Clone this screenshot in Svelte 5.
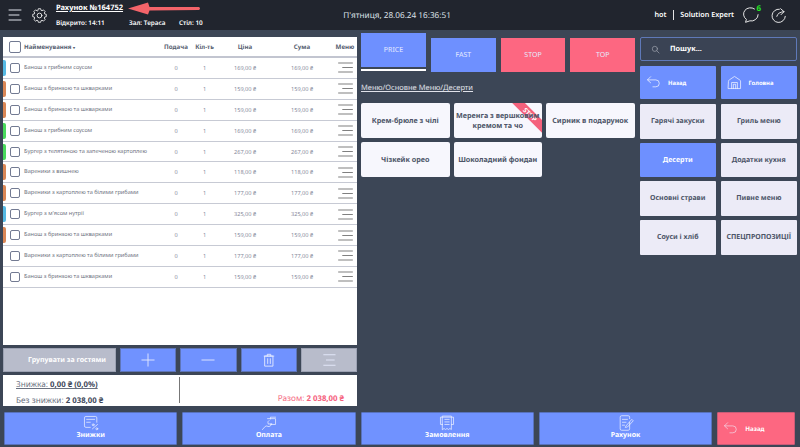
<script>
  const rows = [
    ['blue', 'Банош з грибним соусом', '169,00'],
    ['orange', 'Банош з бринзою та шкварками', '159,00'],
    ['orange', 'Банош з бринзою та шкварками', '159,00'],
    ['green', 'Банош з грибним соусом', '169,00'],
    ['green', 'Бургер з телятиною та запеченою картоплею', '267,00'],
    ['orange', 'Вареники з вишнею', '118,00'],
    ['orange', 'Вареники з картоплею та білими грибами', '177,00'],
    ['blue', "Бургер з м'ясом нутрії", '325,00'],
    ['orange', 'Банош з бринзою та шкварками', '159,00'],
    ['none', 'Вареники з картоплею та білими грибами', '177,00'],
    ['none', 'Банош з бринзою та шкварками', '159,00']
  ];
  const products = [['Крем-брюле з чілі'], ['Меренга з вершковим', 'кремом та чо'], ['Сирник в подарунок'], ['Чізкейк орео'], ['Шоколадний фондан']];
  const cats = ['Гарячі закуски', 'Гриль меню', 'Десерти', 'Додатки кухня', 'Основні страви', 'Пивне меню', 'Соуси і хліб', 'СПЕЦПРОПОЗИЦІЇ'];

  // 8-tooth gear outline
  const gearPath = (() => {
    const pts = [];
    for (let i = 0; i < 8; i++) {
      const a = (i * Math.PI) / 4;
      for (const [d, r] of [[-0.3, 8.6], [-0.17, 11], [0.17, 11], [0.3, 8.6]]) {
        pts.push((12 + r * Math.sin(a + d)).toFixed(2) + ' ' + (12 - r * Math.cos(a + d)).toFixed(2));
      }
    }
    return 'M' + pts.join('L') + 'Z';
  })();
</script>

{#snippet back()}
  <svg class="ic26" viewBox="0 0 26 26"><path d="M8 3 L2.5 8.5 L8 13.5 M3 8.5 H17 Q23 8.5 23 14.5 Q23 20.5 17 20.5 H12" /></svg>
{/snippet}
{#snippet lines()}
  <svg class="menu" viewBox="0 0 18 12"><path d="M1 1H17M5.500 6H17M1 11H17" /></svg>
{/snippet}

<div class="page">
  <header class="top">
    <div class="top-left">
      <svg class="burger" viewBox="0 0 14 12"><path d="M1 1H13M1 6H11M1 11H13" /></svg>
      <svg class="gear" viewBox="0 0 24 24"><circle cx="12" cy="12" r="3.8" /><path d={gearPath} /></svg>
      <div class="order">
        <div class="order-no">Рахунок №164752</div>
        <div class="order-meta"><span class="m1">Відкрито: 14:11</span><span class="m2">Зал: Тераса</span><span>Стіл: 10</span></div>
      </div>
    </div>
    <div class="date">П'ятниця, 28.06.24 16:36:51</div>
    <div class="top-right">
      <span class="user">hot</span><span class="sep"></span><span class="user">Solution Expert</span>
      <span class="chat">
        <svg class="ic-top" viewBox="0 0 20 20"><path d="M13.5 2.300A8 7.500 0 0 0 4 14.500L3 18L8 16.300A8 7.500 0 0 0 17.800 9" /></svg>
        <b>6</b>
      </span>
      <svg class="ic-top share" viewBox="0 0 20 20"><path d="M11 2.600A7.800 7.800 0 1 0 18 11M8 11Q9 6 16.500 5.500M12.500 2L16.500 5.500L13 9" /></svg>
    </div>
  </header>

  <main class="main">
    <section class="left">
      <div class="table">
        <div class="row head">
          <span class="stripe none"></span><span class="cb big"></span>
          <span class="name">Найменування <i>▾</i></span>
          <span class="c1">Подача</span><span class="c2">Кіл-ть</span><span class="c3">Ціна</span><span class="c4">Сума</span><span class="c5">Меню</span>
        </div>
        {#each rows as r}
          <div class="row">
            <span class="stripe {r[0]}"></span><span class="cb"></span>
            <span class="name">{r[1]}</span>
            <span class="c1">0</span><span class="c2">1</span><span class="c3">{r[2]} ₴</span><span class="c4">{r[2]} ₴</span>
            <span class="c5">{@render lines()}</span>
          </div>
        {/each}
      </div>
      <div class="tools">
        <button class="tool grey wide">Групувати за гостями</button>
        <button class="tool"><svg viewBox="0 0 16 16"><path d="M8 1V15M1 8H15" /></svg></button>
        <button class="tool"><svg viewBox="0 0 16 16"><path d="M1 8H15" /></svg></button>
        <button class="tool"><svg viewBox="0 0 16 16"><path d="M2.500 3.500H13.500M6 3.500V1.500H10V3.500M3.500 3.500H12.500V15H3.500ZM6.500 6.500V12M9.500 6.500V12" /></svg></button>
        <button class="tool grey"><svg viewBox="0 0 16 16"><path d="M2 2H15M5 8H14M2 14H15" /></svg></button>
      </div>
      <div class="sum">
        <div class="sum-l">
          <div class="u">Знижка: <b>0,00 ₴ (0,0%)</b></div>
          <div>Без знижки: <b>2 038,00 ₴</b></div>
        </div>
        <div class="sum-r">Разом: <b>2 038,00 ₴</b></div>
      </div>
    </section>

    <section class="mid">
      <div class="tabs">
        <div class="tab-price"><button class="tab blue">PRICE</button></div>
        <button class="tab blue">FAST</button>
        <button class="tab pink">STOP</button>
        <button class="tab pink">TOP</button>
      </div>
      <div class="crumb">Меню/Основне Меню/Десерти</div>
      <div class="products">
        {#each products as p, i}
          <button class="product">
            {#if i === 1}<span class="ribbon">STOP</span>{/if}
            <span class="ptext">{#each p as l}<span class="pline">{l}</span>{/each}</span>
          </button>
        {/each}
      </div>
    </section>

    <section class="right">
      <div class="search">
        <svg viewBox="0 0 14 14"><circle cx="6" cy="6" r="4" /><path d="M9 9L12.500 12.500" /></svg>
        <span>Пошук...</span>
      </div>
      <div class="nav">
        <button class="navbtn">{@render back()}<span>Назад</span></button>
        <button class="navbtn"><svg class="ic26" viewBox="0 0 26 26"><path d="M2.500 10.500 Q2.500 9.500 4 8.500 L13 2.500 L22 8.500 Q23.500 9.500 23.500 10.500 V23.500 H2.500 Z M8 23.500 V13 H18 V23.500 M11 23.500 V16 H15 V23.500" /></svg><span>Головна</span></button>
      </div>
      <div class="cats">
        {#each cats as c}
          <button class="cat" class:active={c === 'Десерти'}>{c}</button>
        {/each}
      </div>
    </section>
  </main>

  <footer class="bottom">
    <button class="act">
      <svg viewBox="0 0 22 22"><path d="M10 17H4Q2 17 2 15V4Q2 2 4 2H17Q19 2 19 4V10M5 6H16M5 10H10M13 19L20 13" /><circle cx="14" cy="13.500" r="1.300" /><circle cx="19" cy="19" r="1.300" /></svg>
      <span>Знижки</span>
    </button>
    <button class="act">
      <svg viewBox="0 0 22 22"><path d="M9 5H20V13H13M2 20Q5 16 7 15L11 16Q14 15 15 12L10 12.500Q8 9 11 7.500M13 5.500V3H20" /></svg>
      <span>Оплата</span>
    </button>
    <button class="act">
      <svg viewBox="0 0 22 22"><path d="M5 13H2V3H20V13H17M5 1.500H17V20L15 18.500L13 20L11 18.500L9 20L7 18.500L5 20ZM8 6H14M8 9.500H14M8 13H14" /></svg>
      <span>Замовлення</span>
    </button>
    <button class="act">
      <svg viewBox="0 0 22 22"><path d="M16 10V19Q16 21 14 21H5Q3 21 3 19V3Q3 1 5 1H14Q16 1 16 3V5M6 6H13M6 10H11M6 14H9M11 15L19 6L21 8L13 16.500L10.500 17Z" /></svg>
      <span>Рахунок</span>
    </button>
    <button class="act exit">{@render back()}<span>Назад</span></button>
  </footer>

  <svg class="arrow" viewBox="0 0 74 15"><path d="M0 7.500L20 1.500L21.500 6L71 6Q73 7.500 71 9L21.500 9.500L20 13.500Z" /></svg>
</div>

<style>
  :global(body) { margin: 0; background: #3c4656; }
  * { box-sizing: border-box; }
  .page {
    position: relative; width: 800px; height: 447px; overflow: hidden;
    background: #3c4656; color: #fff;
    font-family: "Noto Sans", "Open Sans", sans-serif;
    text-rendering: geometricPrecision;
    display: flex; flex-direction: column;
  }
  button { font-family: inherit; border: 0; padding: 0; margin: 0; text-rendering: geometricPrecision; }
  svg { fill: none; stroke: currentColor; stroke-linecap: round; stroke-linejoin: round; }

  .top { height: 30px; background: #21252e; display: grid; grid-template-columns: 1fr auto 1fr; align-items: center; flex: none; }
  .top-left { display: flex; align-items: center; padding-left: 8px; }
  .burger { width: 14px; height: 12px; stroke: #dfe3ea; stroke-width: 1; margin-top: -1px; }
  .gear { width: 15px; height: 15px; stroke: #f0f0f0; stroke-width: 1.400; margin: 0 0 0 10px; }
  .order { margin-left: 9px; margin-top: -1px; }
  .order-no { font-size: 7.500px; font-weight: 700; line-height: 10px; text-decoration: underline; }
  .order-meta { font-size: 6.400px; font-weight: 600; line-height: 8px; margin-top: 6px; white-space: nowrap; display: flex; }
  .m1 { width: 73px; } .m2 { width: 50px; }
  .date { font-size: 8.200px; color: #dde1e8; padding-right: 6px; }
  .top-right { display: flex; align-items: center; justify-content: flex-end; padding-right: 13px; font-size: 7.200px; font-weight: 600; }
  .sep { width: 1px; height: 10px; background: #e4e4e4; margin: 0 6.500px; }
  .chat { position: relative; display: flex; margin-left: 9px; }
  .ic-top { width: 17px; height: 17px; stroke: #f2f2f2; stroke-width: 1.100; }
  .chat b { position: absolute; right: -1px; top: -3px; font-size: 8px; line-height: 10px; color: #23e823; font-weight: 700; }
  .share { margin-left: 10px; }

  .main { display: flex; flex: 1; min-height: 0; padding: 7px 3px 0 3px; gap: 4px; }
  .left { width: 354px; flex: none; display: flex; flex-direction: column; }
  .table { height: 308px; background: #fff; }
  .row {
    height: 20.900px; display: flex; align-items: center; color: #6e7280; font-size: 5.600px;
    border-bottom: 1.500px solid #c7cad4; white-space: nowrap;
  }
  .row.head { height: 21px; border-bottom: 2px solid #c2c5d0; font-weight: 700; font-size: 6.200px; }
  .row.head span { color: #565e70; }
  .stripe { width: 3px; height: 16px; border-radius: 0 2px 2px 0; flex: none; }
  .blue.stripe { background: #55b9e3; } .orange.stripe { background: #d98655; } .green.stripe { background: #49d95c; }
  .none.stripe { background: transparent; }
  .cb { width: 10px; height: 10px; border: 1px solid #727a92; border-radius: 2px; margin-left: 4px; flex: none; }
  .cb.big { width: 12px; height: 12px; margin-left: 3px; }
  .name { width: 142px; padding-left: 4px; flex: none; margin-top: -2px; }
  .head .name { margin-top: 0; width: 141px; padding-left: 3px; font-size: 6.100px; }
  .name i { font-size: 4px; font-style: normal; }
  .c1, .c2, .c3, .c4 { text-align: center; flex: none; color: #85889a; }
  .c1 { width: 28px; } .c2 { width: 29px; } .c3 { width: 52px; } .c4 { width: 62px; }
  .c5 { width: 24px; display: flex; justify-content: center; flex: none; }
  .menu { width: 17px; height: 11px; stroke: #808080; stroke-width: 1.100; stroke-linecap: butt; }

  .tools { display: flex; gap: 4px; margin-top: 3px; height: 24px; }
  .tool { flex: 1; background: #7092ff; color: #e8edff; display: flex; align-items: center; justify-content: center; border: 1px solid #5e75b8; }
  .tool svg { width: 14px; height: 14px; stroke-width: 1; }
  .tool.wide { flex: none; width: 113px; font-size: 7px; font-weight: 700; padding-left: 15px; color: #fff; }
  .tool.grey { background: #b8bccb; border-color: #9ca2b3; }

  .sum { margin-top: 3px; height: 31px; background: #fff; color: #6a7180; font-size: 8.200px; display: flex; }
  .sum b { color: #3e485a; font-weight: 700; font-size: 7.800px; }
  .sum-l { width: 177px; padding-left: 13px; border-right: 1px solid #777; line-height: 15px; margin-top: 2px; height: 26px; }
  .u { text-decoration: underline; }
  .sum-r { flex: 1; text-align: right; padding: 19px 13px 0 0; color: #f56a82; line-height: 10px; }
  .sum-r b { color: #f5607c; }

  .mid { width: 274px; flex: none; display: flex; flex-direction: column; }
  .tabs { display: flex; gap: 5px; align-items: flex-end; height: 39px; margin-top: -4px; }
  .tab { width: 65px; height: 34px; font-size: 7px; color: #e6ebff; display: block; }
  .tab-price { border-bottom: 2px solid #fff; padding-bottom: 2px; height: 38px; align-self: flex-start; }
  .tab.blue { background: #6e90ff; } .tab.pink { background: #fd6781; }
  .crumb { font-size: 7.500px; text-decoration: underline; color: #e0e2ea; margin-top: 11px; line-height: 11px; height: 11px; }
  .products { display: grid; grid-template-columns: 88.500px 88.500px 88.500px; gap: 4px; margin-top: 9px; }
  .product {
    height: 35px; background: #f7f7fd; border-radius: 2px; color: #4d5568; font-size: 7.200px; font-weight: 700;
    position: relative; overflow: hidden; line-height: 10px; white-space: nowrap;
  }
  .ptext { position: relative; display: block; }
  .pline { display: block; }
  .ribbon { position: absolute; right: -18px; top: 7px; width: 60px; height: 9.200px; background: #f4617c; color: #fff; font-size: 6.500px; line-height: 9px; transform: rotate(45deg); text-align: center; }

  .right { flex: 1; display: flex; flex-direction: column; margin-left: 1px; }
  .search { height: 24px; border: 1px solid #5f79b8; border-radius: 2px; background: #3a4354; display: flex; align-items: center; font-size: 7.300px; font-weight: 700; }
  .search svg { width: 9px; height: 9px; stroke: #a6abb5; stroke-width: 1; margin-left: 10px; margin-right: 10px; }
  .nav { display: grid; grid-template-columns: 75.500px 76.500px; gap: 5px; margin-top: 5px; }
  .navbtn { height: 33px; background: #6e90ff; color: #fff; font-size: 5.900px; font-weight: 700; display: flex; align-items: center; text-align: left; padding-left: 6px; border-radius: 1px; }
  .ic26 { width: 15px; height: 15px; stroke-width: 1.300; stroke: #f2f4ff; margin-right: 7px; flex: none; }
  .cats { display: grid; grid-template-columns: 75.500px 76.500px; gap: 4px 5px; margin-top: 5px; }
  .cat { height: 34.700px; background: #ecebf7; color: #4d5568; font-size: 7px; font-weight: 700; border-radius: 1px; }
  .cat.active { background: #6e90ff; color: #fff; }

  .bottom { display: flex; gap: 5px; height: 33px; margin: 0 5px 2px 4px; flex: none; }
  .act { width: 174px; background: #7092ff; color: #fff; font-size: 7px; font-weight: 700; display: flex; flex-direction: column; align-items: center; border: 1px solid #5872bd; border-radius: 1px; padding-top: 2px; }
  .act svg { width: 16px; height: 16px; stroke-width: 1; stroke: #f0f3ff; flex: none; }
  .act span { line-height: 9px; }
  .act.exit { width: 78px; background: #fd6781; border-color: #c95c77; flex-direction: row; padding: 0 0 0 5px; font-size: 6.200px; }
  .act.exit svg { width: 15px; height: 15px; margin-right: 7px; }

  .arrow { position: absolute; left: 128px; top: 1px; width: 74px; height: 15px; fill: #f4646a; stroke: none; }
</style>
